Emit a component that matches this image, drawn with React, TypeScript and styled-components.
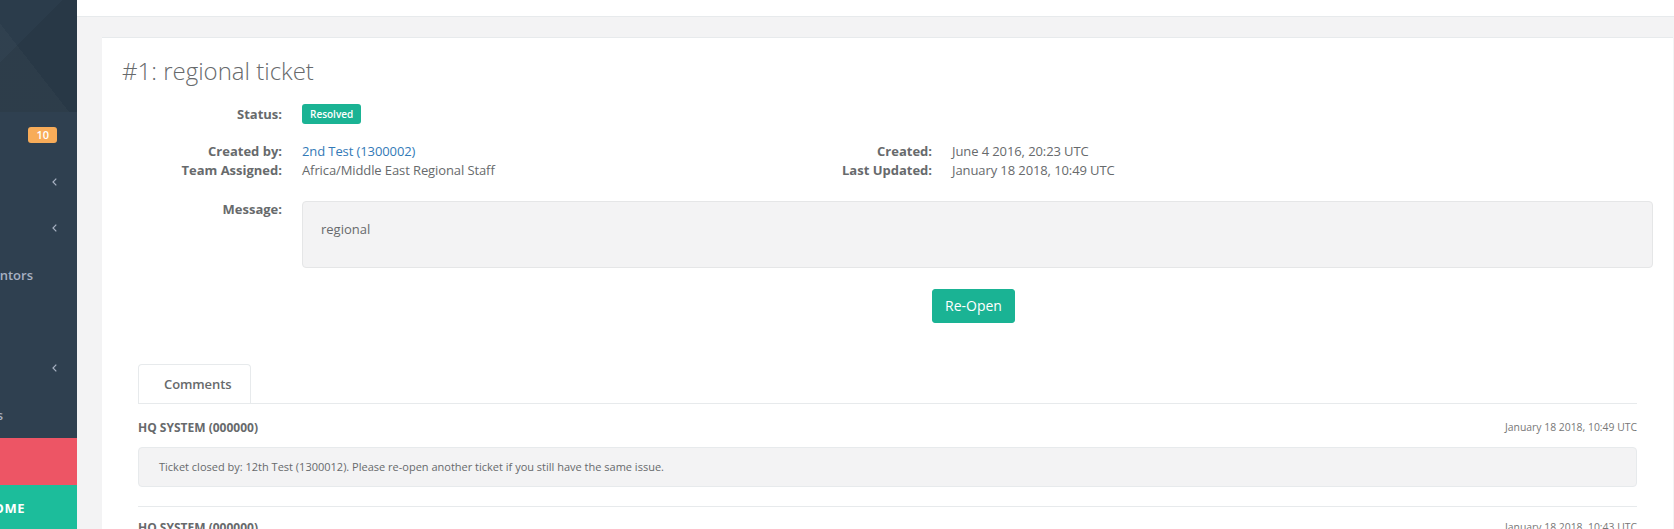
import React from "react";
import styled, { createGlobalStyle } from "styled-components";

const GlobalStyle = createGlobalStyle`
  * { box-sizing: border-box; }
  html, body { margin: 0; padding: 0; height: 100%; overflow: hidden; }
  body {
    font-family: "Open Sans", "Liberation Sans", sans-serif;
    font-size: 13px;
    line-height: 1.42857;
    color: #676a6c;
    background: #f3f3f4;
  }
  #root { height: 100%; }
`;

const Shell = styled.div`
  display: flex;
  height: 100%;
  overflow: hidden;
`;

/* ---------- Sidebar ---------- */
const Sidebar = styled.nav`
  flex: 0 0 77px;
  width: 77px;
  background: #2f4050;
  overflow: hidden;
  display: flex;
  flex-direction: column;
`;

const SideHeader = styled.div`
  flex: 0 0 112px;
  height: 112px;
  background-color: #2b3c4b;
  background-image:
    linear-gradient(232deg, transparent 0 58%, rgba(255, 255, 255, 0.025) 58% 100%),
    linear-gradient(135deg, transparent 0 33%, rgba(0, 0, 0, 0.07) 33% 100%);
`;

const NavItem = styled.div<{ $bg?: string; $h?: number; $pr?: number }>`
  flex: 0 0 auto;
  height: ${(p) => p.$h ?? 46.6}px;
  display: flex;
  align-items: center;
  justify-content: flex-end;
  padding-right: ${(p) => p.$pr ?? 20}px;
  background: ${(p) => p.$bg ?? "transparent"};
  white-space: nowrap;
`;

const NavLabel = styled.span<{ $gap?: number; $strong?: boolean }>`
  font-size: 13px;
  font-weight: ${(p) => (p.$strong ? 700 : 600)};
  color: ${(p) => (p.$strong ? "#ffffff" : "#a7b1c2")};
  letter-spacing: ${(p) => (p.$strong ? "0.5px" : "0")};
  margin-right: ${(p) => p.$gap ?? 0}px;
`;

const NavBadge = styled.span`
  display: inline-block;
  background: #f8ac59;
  color: #fff;
  font-size: 11px;
  font-weight: 600;
  line-height: 16px;
  height: 16px;
  padding: 0 8px;
  border-radius: 3px;
`;

const Chevron = () => (
  <svg width="5" height="8" viewBox="0 0 5 8" aria-hidden="true">
    <polyline points="4.3,0.6 1,4 4.3,7.4" fill="none" stroke="#a7b1c2" strokeWidth="1.2" />
  </svg>
);

/* ---------- Main ---------- */
const Main = styled.div`
  flex: 1;
  min-width: 0;
  display: flex;
  flex-direction: column;
  background: #f3f3f4;
`;

const TopBar = styled.header`
  flex: 0 0 17px;
  height: 17px;
  background: #fff;
  border-bottom: 1px solid #e7eaec;
`;

const Content = styled.main`
  padding: 20px 1px 0 25px;
`;

const Card = styled.section`
  background: #fff;
  border-top: 1px solid #e7eaec;
  padding: 15px 20px 20px;
`;

const Title = styled.h2`
  margin: 5px 0 20px;
  font-size: 24px;
  font-weight: 300;
  line-height: 1.1;
  color: #676a6c;
`;

const FieldRow = styled.div<{ $mt?: number; $align?: string }>`
  display: grid;
  grid-template-columns: 160px 1fr;
  column-gap: 20px;
  align-items: ${(p) => p.$align ?? "center"};
  margin-top: ${(p) => p.$mt ?? 0}px;
`;

const Label = styled.div<{ $lh?: number }>`
  font-weight: 700;
  text-align: right;
  line-height: ${(p) => p.$lh ?? 19}px;
`;

const StatusBadge = styled.span`
  justify-self: start;
  display: inline-block;
  background: #1ab394;
  color: #fff;
  font-size: 10px;
  font-weight: 600;
  line-height: 14px;
  padding: 3px 8px;
  border-radius: 3px;
`;

const MetaGrid = styled.div`
  display: grid;
  grid-template-columns: 42.46% 1fr;
  margin-top: 18px;
`;

const DefList = styled.dl`
  margin: 0;
  display: grid;
  grid-template-columns: 160px 1fr;
  column-gap: 20px;
  line-height: 19px;

  dt {
    font-weight: 700;
    text-align: right;
    white-space: nowrap;
  }
  dd {
    margin: 0;
    white-space: nowrap;
    letter-spacing: -0.1px;
  }
`;

const Link = styled.a`
  color: #337ab7;
  text-decoration: none;
`;

const MessageBox = styled.div`
  min-height: 67px;
  background: #f3f3f4;
  border: 1px solid #e5e6e7;
  border-radius: 4px;
  padding: 18px 18px;
`;

const ButtonCell = styled.div`
  text-align: center;
  padding-right: 8px;
`;

const PrimaryButton = styled.button`
  height: 34px;
  padding: 0 12px;
  font-family: "Open Sans", "Liberation Sans", sans-serif;
  font-size: 14px;
  color: #fff;
  background: #1ab394;
  border: 1px solid #1ab394;
  border-radius: 3px;
  cursor: pointer;
`;

const Tabs = styled.div`
  margin: 41px 16px 0;
`;

const TabBar = styled.div`
  display: flex;
  border-bottom: 1px solid #e7eaec;
`;

const Tab = styled.div`
  border: 1px solid #e7eaec;
  border-bottom: none;
  border-radius: 4px 4px 0 0;
  background: #fff;
  padding: 10px 19px 10px 25px;
  font-weight: 600;
  color: #676a6c;
  letter-spacing: -0.1px;
`;

const TabPane = styled.div`
  padding-top: 3px;
`;

const Comment = styled.article`
  padding: 12px 0 19px;
  border-bottom: 1px solid #e7eaec;
`;

const CommentHead = styled.div`
  display: flex;
  justify-content: space-between;
  align-items: center;
  line-height: 17px;
`;

const Author = styled.strong`
  font-size: 12px;
  font-weight: 700;
  color: #676a6c;
`;

const Stamp = styled.span`
  font-size: 10.4px;
  color: #777;
`;

const CommentBody = styled.div`
  margin-top: 10.5px;
  background: #f3f3f4;
  border: 1px solid #e7eaec;
  border-radius: 4px;
  padding: 11px 20px;
  font-size: 11px;
  line-height: 15.7px;
`;

const comments = [
  {
    author: "HQ SYSTEM (000000)",
    date: "January 18 2018, 10:49 UTC",
    text: "Ticket closed by: 12th Test (1300012). Please re-open another ticket if you still have the same issue.",
  },
  {
    author: "HQ SYSTEM (000000)",
    date: "January 18 2018, 10:43 UTC",
    text: "Ticket status changed.",
  },
];

export default function App() {
  return (
    <>
      <GlobalStyle />
      <Shell>
        <Sidebar>
          <SideHeader />
          <NavItem>
            <NavBadge>10</NavBadge>
          </NavItem>
          <NavItem>
            <Chevron />
          </NavItem>
          <NavItem>
            <Chevron />
          </NavItem>
          <NavItem>
            <NavLabel $gap={24}>Mentors</NavLabel>
            <Chevron />
          </NavItem>
          <NavItem />
          <NavItem>
            <Chevron />
          </NavItem>
          <NavItem $pr={74}>
            <NavLabel>Reports</NavLabel>
          </NavItem>
          <NavItem $bg="#ed5565" $h={47} />
          <NavItem $bg="#1cbd9b" $h={47} $pr={52}>
            <NavLabel $strong>WELCOME</NavLabel>
          </NavItem>
        </Sidebar>

        <Main>
          <TopBar />
          <Content>
            <Card>
              <Title>#1: regional ticket</Title>

              <FieldRow>
                <Label $lh={20}>Status:</Label>
                <StatusBadge>Resolved</StatusBadge>
              </FieldRow>

              <MetaGrid>
                <DefList>
                  <dt>Created by:</dt>
                  <dd>
                    <Link href="#">2nd Test (1300002)</Link>
                  </dd>
                  <dt>Team Assigned:</dt>
                  <dd>Africa/Middle East Regional Staff</dd>
                </DefList>
                <DefList>
                  <dt>Created:</dt>
                  <dd>June 4 2016, 20:23 UTC</dd>
                  <dt>Last Updated:</dt>
                  <dd>January 18 2018, 10:49 UTC</dd>
                </DefList>
              </MetaGrid>

              <FieldRow $mt={20.5} $align="start">
                <Label $lh={16}>Message:</Label>
                <MessageBox>regional</MessageBox>
              </FieldRow>

              <FieldRow $mt={21}>
                <div />
                <ButtonCell>
                  <PrimaryButton>Re-Open</PrimaryButton>
                </ButtonCell>
              </FieldRow>

              <Tabs>
                <TabBar>
                  <Tab>Comments</Tab>
                </TabBar>
                <TabPane>
                  {comments.map((c, i) => (
                    <Comment key={i}>
                      <CommentHead>
                        <Author>{c.author}</Author>
                        <Stamp>{c.date}</Stamp>
                      </CommentHead>
                      <CommentBody>{c.text}</CommentBody>
                    </Comment>
                  ))}
                </TabPane>
              </Tabs>
            </Card>
          </Content>
        </Main>
      </Shell>
    </>
  );
}
